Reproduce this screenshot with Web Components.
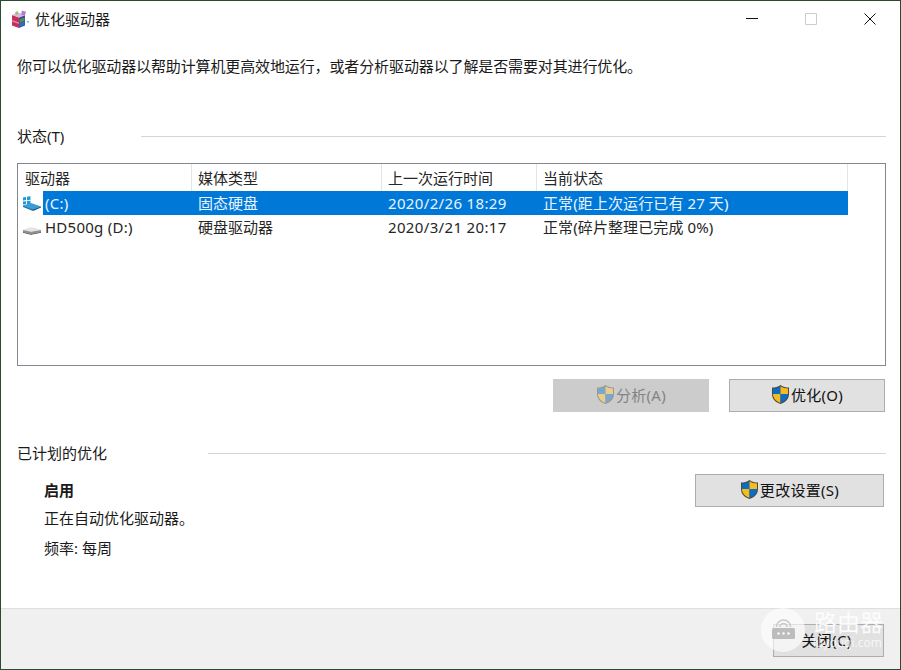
<!DOCTYPE html>
<html lang="zh">
<head>
<meta charset="utf-8">
<title>优化驱动器</title>
<style>
html, body { margin: 0; padding: 0; background: #fff; }
body { font-family: "Noto Sans", "Noto Sans CJK SC", sans-serif; font-size: 15px; color: #1a1a1a; }
</style>
</head>
<body>
<opt-window>
    <title-bar slot="title">优化驱动器</title-bar>
    <p-line top="20" slot="intro">你可以优化驱动器以帮助计算机更高效地运行，或者分析驱动器以了解是否需要对其进行优化。</p-line>
    <section-head slot="state">状态(T)</section-head>
    <drive-list slot="list"></drive-list>
    <div slot="actions" style="display:flex;justify-content:flex-end;gap:20px;">
        <ui-button width="156" shield disabled>分析(A)</ui-button>
        <ui-button width="156" shield>优化(O)</ui-button>
    </div>
    <section-head slot="plan" line="208">已计划的优化</section-head>
    <plan-info slot="info"></plan-info>
    <foot-bar slot="foot"></foot-bar>
</opt-window>

<script>
class OptWindow extends HTMLElement {
    constructor() {
        super();
        this.attachShadow({ mode: 'open' });
        this.shadowRoot.innerHTML = `
            <style>
                :host {
                    display: flex;
                    flex-direction: column;
                    box-sizing: border-box;
                    width: 901px;
                    height: 670px;
                    border: 1px solid #2c4a30;
                    background: #fff;
                    position: relative;
                    overflow: hidden;
                }
                .body {
                    flex: 1;
                    display: flex;
                    flex-direction: column;
                    padding: 0 15px 0 16px;
                    min-height: 0;
                }
                .state { margin-top: 51px; }
                .list { margin-top: 17px; }
                .actions { margin-top: 13px; }
                .plan { margin-top: 31px; }
            </style>
            <slot name="title"></slot>
            <div class="body">
                <slot name="intro"></slot>
                <div class="state"><slot name="state"></slot></div>
                <div class="list"><slot name="list"></slot></div>
                <div class="actions"><slot name="actions"></slot></div>
                <div class="plan"><slot name="plan"></slot></div>
                <slot name="info"></slot>
            </div>
            <slot name="foot"></slot>
        `;
    }
}

class TitleBar extends HTMLElement {
    constructor() {
        super();
        this.attachShadow({ mode: 'open' });
        this.shadowRoot.innerHTML = `
            <style>
                :host {
                    display: flex;
                    align-items: center;
                    height: 36px;
                    flex: none;
                    padding-left: 10px;
                }
                svg { display: block; flex: none; }
                .app { margin-right: 6px; }
                .text { flex: 1; font-size: 15px; line-height: 36px; }
                .ctl {
                    width: 59px;
                    height: 36px;
                    display: flex;
                    align-items: center;
                    justify-content: center;
                }
            </style>
            <svg class="app" width="18" height="19" viewBox="0 0 18 19">
                <path d="M1 5l7 2.500V18l-7-2.500z" fill="#c62f5c"/>
                <path d="M1 10l7 2.500v1.500l-7-2.500z" fill="#e887a6"/>
                <path d="M8 7.500l6-2.500v10.500L8 18z" fill="#55409c"/>
                <path d="M8.500 9.500l5-2v3.500l-5 2z" fill="#3e9c48"/>
                <path d="M8.500 13.500l5-2v3.500l-5 2z" fill="#2a70c4"/>
                <path d="M1 5l6-2.500L14 5 8 7.500z" fill="#d6b6e0"/>
                <path d="M11 .500l4 1.200-1.200 4-3.800-1.300z" fill="#b57ccc"/>
                <path d="M4 2.500L6.500 1l1 2.500L5 4.800z" fill="#92c06c"/>
                <path d="M16 11h2v1.500h-2z" fill="#7db8d8"/>
            </svg>
            <div class="text"><slot></slot></div>
            <div class="ctl">
                <svg width="12" height="12" viewBox="0 0 12 12"><path d="M0 5.500h12" stroke="#111" fill="none"/></svg>
            </div>
            <div class="ctl">
                <svg width="12" height="12" viewBox="0 0 12 12"><path d="M.5.500h11v11H.5z" stroke="#ccc" fill="none"/></svg>
            </div>
            <div class="ctl" style="width:60px;">
                <svg width="12" height="12" viewBox="0 0 12 12"><path d="M.5.500l11 11M11.500.500l-11 11" stroke="#111" fill="none"/></svg>
            </div>
        `;
    }
}

class PLine extends HTMLElement {
    constructor() {
        super();
        this.attachShadow({ mode: 'open' });
    }

    connectedCallback() {
        const top = this.getAttribute('top') || 0;
        this.shadowRoot.innerHTML = `
            <style>
                :host { display: block; margin-top: ${top}px; font-size: 15px; line-height: 18px; white-space: nowrap; letter-spacing: -0.12px; }
            </style>
            <slot></slot>
        `;
    }
}

class SectionHead extends HTMLElement {
    constructor() {
        super();
        this.attachShadow({ mode: 'open' });
    }

    connectedCallback() {
        const gap = this.getAttribute('line') ? 191 : 124;
        this.shadowRoot.innerHTML = `
            <style>
                :host { display: flex; align-items: center; height: 20px; font-size: 15px; line-height: 20px; margin-right: -1px; }
                .label { width: ${gap}px; flex: none; white-space: nowrap; }
                .rule { flex: 1; height: 1px; background: #d5d5d5; }
            </style>
            <div class="label"><slot></slot></div>
            <div class="rule"></div>
        `;
    }
}

class DriveList extends HTMLElement {
    constructor() {
        super();
        this.attachShadow({ mode: 'open' });
        this.shadowRoot.innerHTML = `
            <style>
                :host {
                    display: block;
                    box-sizing: border-box;
                    height: 203px;
                    width: 869px;
                    border: 1px solid #828790;
                    font-size: 15px;
                    color: #262626;
                }
                .head {
                    display: grid;
                    grid-template-columns: 173px 190px 155px 311px;
                    height: 27px;
                    margin-left: 1px;
                    width: 829px;
                }
                .head div {
                    box-sizing: border-box;
                    border-right: 1px solid #e5e5e5;
                    padding-left: 6px;
                    line-height: 28px;
                    white-space: nowrap;
                }
            </style>
            <div class="head">
                <div>驱动器</div>
                <div>媒体类型</div>
                <div>上一次运行时间</div>
                <div>当前状态</div>
            </div>
            <drive-row selected icon="win" name="(C:)" media="固态硬盘" last="2020/2/26 18:29" state="正常(距上次运行已有 27 天)"></drive-row>
            <drive-row icon="hdd" name="HD500g (D:)" media="硬盘驱动器" last="2020/3/21 20:17" state="正常(碎片整理已完成 0%)"></drive-row>
        `;
    }
}

class DriveRow extends HTMLElement {
    constructor() {
        super();
        this.attachShadow({ mode: 'open' });
    }

    connectedCallback() {
        const selected = this.hasAttribute('selected');
        const icon = this.getAttribute('icon') === 'win' ? `
            <path d="M1 10.500l8-2.500 10 3.500-8 3.500z" fill="#3d9bd6"/>
            <path d="M1 10.500l10 4v1.500l-10-4z" fill="#1f6fa8"/>
            <path d="M11 14.500l8-3v1l-8 3.500z" fill="#16527f"/>
            <path d="M1 2.500l3-.500v3l-3 .500zM5 1.800l3.500-.600v3.500l-3.500.500zM1 6.500l3-.300v3l-3 .300zM5 6l3.500-.300v3.300l-3.500.300z" fill="#1e9bd7"/>
        ` : `
            <path d="M1 11l6-2.500h5l7 2.500-7 1.500h-5z" fill="#e4e4e4"/>
            <path d="M1 11l8 1.800 10-1.800v2l-10 2-8-2z" fill="#8f8f8f"/>
            <path d="M1 13l8 2 10-2v.800l-10 2-8-2z" fill="#444"/>
        `;
        this.shadowRoot.innerHTML = `
            <style>
                :host {
                    display: grid;
                    grid-template-columns: 24px 149px 190px 155px 311px;
                    width: 829px;
                    height: ${selected ? 24 : 25}px;
                    line-height: 24px;
                    font-size: 15px;
                    white-space: nowrap;
                    margin-left: 1px;
                }
                .ic { display: flex; align-items: center; padding-left: 3px; }
                svg { display: block; margin-top: 1px; }
                .cell { padding-left: 6px; box-sizing: border-box; }
                .name { padding-left: 2px; letter-spacing: .25px; }
                .last { letter-spacing: .35px; }
                .st { letter-spacing: .1px; }
                .sel { background: #0078d7; color: #e8f4ff; }
            </style>
            <div class="ic"><svg width="20" height="18" viewBox="0 0 20 18">${icon}</svg></div>
            <div class="cell name ${selected ? 'sel' : ''}">${this.getAttribute('name')}</div>
            <div class="cell ${selected ? 'sel' : ''}">${this.getAttribute('media')}</div>
            <div class="cell last ${selected ? 'sel' : ''}">${this.getAttribute('last')}</div>
            <div class="cell st ${selected ? 'sel' : ''}">${this.getAttribute('state')}</div>
        `;
    }
}

class ShieldIcon extends HTMLElement {
    constructor() {
        super();
        this.attachShadow({ mode: 'open' });
    }

    connectedCallback() {
        const faded = this.hasAttribute('faded');
        const blue = faded ? '#7aa6cf' : '#0a6cc4';
        const yellow = faded ? '#e8cd8f' : '#f6bb1c';
        const edge = faded ? '#9a9a8a' : '#4c4a3a';
        this.shadowRoot.innerHTML = `
            <style>
                :host { display: inline-block; width: 19px; height: 21px; flex: none; }
                svg { display: block; }
            </style>
            <svg width="19" height="21" viewBox="0 0 19 21">
                <path d="M9.500 1C7 3 4 3.500 1 3.500V10c0 5 3.500 8.500 8.500 10 5-1.500 8.500-5 8.500-10V3.500C15 3.500 12 3 9.500 1z" fill="${edge}"/>
                <path d="M9.500 2.200C7.300 3.800 4.800 4.400 2 4.500V10h7.500z" fill="${blue}"/>
                <path d="M9.500 2.200c2.200 1.600 4.700 2.200 7.500 2.300V10H9.500z" fill="${yellow}"/>
                <path d="M2 10c0 4.300 3 7.400 7.500 8.900V10z" fill="${yellow}"/>
                <path d="M17 10c0 4.300-3 7.400-7.500 8.900V10z" fill="${blue}"/>
            </svg>
        `;
    }
}

class UiButton extends HTMLElement {
    constructor() {
        super();
        this.attachShadow({ mode: 'open' });
    }

    connectedCallback() {
        const disabled = this.hasAttribute('disabled');
        const shield = this.hasAttribute('shield');
        this.shadowRoot.innerHTML = `
            <style>
                :host {
                    display: flex;
                    align-items: center;
                    justify-content: center;
                    box-sizing: border-box;
                    width: ${this.getAttribute('width')}px;
                    height: 33px;
                    padding: 0 ${shield ? 0 : 4}px ${shield ? 2 : 0}px 0;
                    border: 1px solid ${disabled ? '#cccccc' : '#adadad'};
                    background: ${disabled ? '#cccccc' : '#e1e1e1'};
                    color: ${disabled ? '#838383' : '#111'};
                    font-size: 15px;
                    line-height: 20px;
                    letter-spacing: .3px;
                    white-space: nowrap;
                }
                shield-icon { margin-right: 1px; }
            </style>
            ${shield ? `<shield-icon ${disabled ? 'faded' : ''}></shield-icon>` : ''}
            <slot></slot>
        `;
    }
}

class PlanInfo extends HTMLElement {
    constructor() {
        super();
        this.attachShadow({ mode: 'open' });
        this.shadowRoot.innerHTML = `
            <style>
                :host {
                    display: flex;
                    justify-content: space-between;
                    align-items: flex-start;
                    margin-top: 10px;
                    font-size: 15px;
                }
                .txt { padding: 7px 0 0 27px; }
                .txt div { line-height: 20px; height: 20px; white-space: nowrap; }
                .b { font-weight: 700; }
                .m1 { margin-top: 8px; }
                .m2 { margin-top: 10px; }
                .side { padding: 1px 1px 0 0; }
            </style>
            <div class="txt">
                <div class="b">启用</div>
                <div class="m1">正在自动优化驱动器。</div>
                <div class="m2">频率: 每周</div>
            </div>
            <div class="side"><ui-button width="189" shield>更改设置(S)</ui-button></div>
        `;
    }
}

class FootBar extends HTMLElement {
    constructor() {
        super();
        this.attachShadow({ mode: 'open' });
        this.shadowRoot.innerHTML = `
            <style>
                :host {
                    display: flex;
                    justify-content: flex-end;
                    align-items: center;
                    flex: none;
                    box-sizing: border-box;
                    height: 61px;
                    border-top: 1px solid #dfdfdf;
                    background: #f0f0f0;
                    padding: 2px 16px 0 0;
                }
            </style>
            <ui-button width="111">关闭(C)</ui-button>
            <water-mark></water-mark>
        `;
    }
}

class WaterMark extends HTMLElement {
    constructor() {
        super();
        this.attachShadow({ mode: 'open' });
        this.shadowRoot.innerHTML = `
            <style>
                :host { position: absolute; left: 759px; top: 600px; width: 130px; height: 62px; color: rgba(255,255,255,.88); }
                .disc { position: absolute; left: 1px; top: 7px; width: 44px; height: 44px; border-radius: 50%; background: rgba(255,255,255,.62); }
                svg { position: absolute; left: 12px; top: 15px; }
                .big { position: absolute; left: 54px; top: 5px; font-size: 23px; line-height: 32px; white-space: nowrap; }
                .small { position: absolute; right: 8px; top: 32px; font-size: 12px; line-height: 20px; white-space: nowrap; color: rgba(255,255,255,.72); }
            </style>
            <div class="disc"></div>
            <svg width="24" height="24" viewBox="0 0 24 24">
                <path d="M4.500 11a7 7 0 0 1 14 0M8 11a3.500 3.500 0 0 1 7 0" stroke="#c9c9c9" stroke-width="1.600" fill="none"/>
                <rect x="0" y="12" width="23" height="11" rx="1.500" fill="#bdbdbd"/>
                <circle cx="6.500" cy="17.500" r="1.200" fill="#fff"/><circle cx="11.500" cy="17.500" r="1.200" fill="#fff"/><circle cx="16.500" cy="17.500" r="1.200" fill="#fff"/>
            </svg>
            <div class="big">路由器</div>
            <div class="small">luyouqi.com</div>
        `;
    }
}

customElements.define('opt-window', OptWindow);
customElements.define('title-bar', TitleBar);
customElements.define('p-line', PLine);
customElements.define('section-head', SectionHead);
customElements.define('drive-list', DriveList);
customElements.define('drive-row', DriveRow);
customElements.define('shield-icon', ShieldIcon);
customElements.define('ui-button', UiButton);
customElements.define('plan-info', PlanInfo);
customElements.define('foot-bar', FootBar);
customElements.define('water-mark', WaterMark);
</script>
</body>
</html>
